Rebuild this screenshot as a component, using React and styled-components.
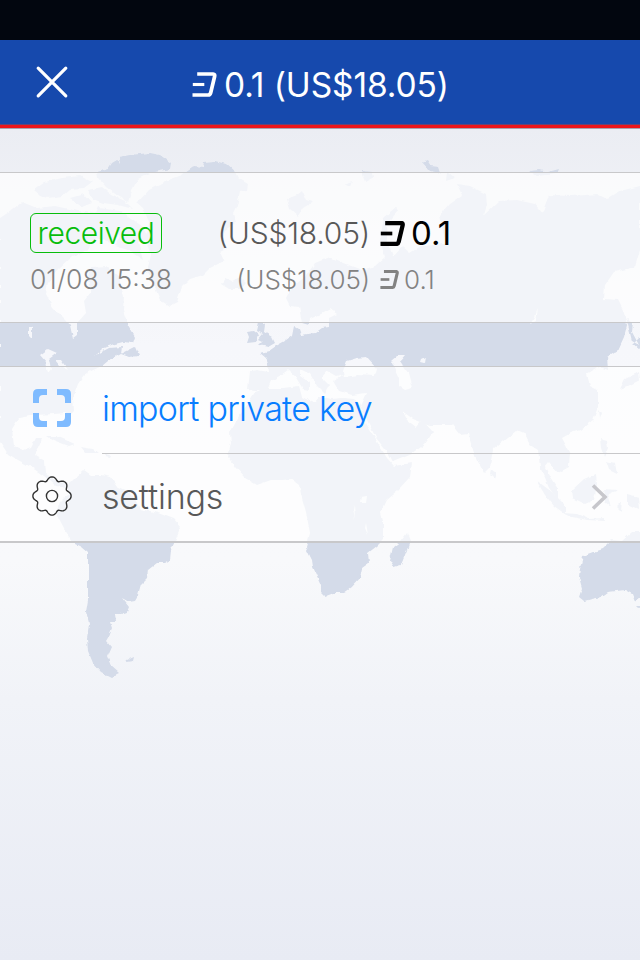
import React from "react";
import styled, { createGlobalStyle } from "styled-components";

const GlobalStyle = createGlobalStyle`
  * { box-sizing: border-box; }
  body { margin: 0; font-family: Inter, "Liberation Sans", sans-serif; }
`;

const Screen = styled.div`
  width: 640px;
  height: 960px;
  display: grid;
  grid-template: 960px / 640px;
  overflow: hidden;
  background: linear-gradient(#ebedf3 128px, #f6f7fb 345px, #f8f9fb 560px, #f1f3f8 700px, #e8ebf4 960px);
`;
const MapLayer = styled.svg`
  grid-area: 1 / 1;
  fill: #d4dbe9;
`;
const Content = styled.div`
  grid-area: 1 / 1;
  z-index: 1;
  display: flex;
  flex-direction: column;
`;
const StatusBar = styled.div`
  height: 40px;
  background: #02060f;
`;
const Header = styled.header`
  height: 89px;
  display: flex;
  background: linear-gradient(#1649ad 84px, #654475 84px 85px, #ec151b 85px 88px, #a8a2ae 88px);
`;
const CloseButton = styled.button`
  width: 104px;
  height: 84px;
  padding: 0;
  border: 0;
  background: none;
  svg { display: block; }
`;
const Title = styled.h1`
  margin: 0;
  padding-left: 88px;
  height: 89px;
  display: flex;
  align-items: center;
  gap: 7px;
  color: #fff;
  font-size: 33.5px;
  font-weight: 370;
  letter-spacing: -0.1px;
  svg { margin-top: -1px; }
`;
const Panel = styled.section`
  height: ${(p) => p.$height}px;
  margin-top: ${(p) => p.$gap}px;
  background: rgba(255, 255, 255, 0.7);
  border-top: 1px solid #c8c8ca;
  border-bottom: ${(p) => p.$bottom}px solid #c8c8ca;
`;
const Transaction = styled(Panel)`
  display: flex;
  padding: 40px 0 0 30px;
`;
const Summary = styled.div`
  width: 160px;
`;
const Badge = styled.div`
  width: 132px;
  height: 40px;
  border: 1px solid #08bd0c;
  border-radius: 6px;
  color: #08bd0c;
  font-size: 30px;
  font-weight: 300;
  line-height: 39px;
  text-align: center;
  letter-spacing: -0.45px;
`;
const DateText = styled.div`
  height: 52px;
  line-height: 52px;
  font-size: 26.5px;
  font-weight: 300;
  color: #828282;
  letter-spacing: 0;
  white-space: nowrap;
`;
const Amounts = styled.div`
  width: 280px;
`;
const AmountRow = styled.div`
  height: ${(p) => (p.$small ? 52 : 40)}px;
  display: grid;
  grid-template-columns: 180px auto 1fr;
  align-items: center;
  color: ${(p) => (p.$small ? "#828282" : "#000")};
  font-size: ${(p) => (p.$small ? 26 : 33)}px;
  font-weight: ${(p) => (p.$small ? 300 : 400)};
`;
const Fiat = styled.span`
  text-align: right;
  white-space: nowrap;
  font-weight: 300;
  font-size: ${(p) => (p.$small ? 26 : 30)}px;
  letter-spacing: ${(p) => (p.$small ? 0 : -0.2)}px;
  color: ${(p) => (p.$small ? "#828282" : "#585858")};
`;
const Coin = styled.span`
  display: flex;
  align-items: center;
  gap: ${(p) => (p.$small ? 5 : 6)}px;
  padding-left: 10px;
`;
const MenuRow = styled.div`
  height: ${(p) => p.$height}px;
  display: flex;
`;
const IconCell = styled.div`
  width: 102px;
  padding: ${(p) => p.$top}px 0 0 32px;
  svg { display: block; }
`;
const MenuLabel = styled.div`
  flex: 1;
  display: flex;
  align-items: center;
  justify-content: space-between;
  padding: 0 31px ${(p) => p.$lift}px 0;
  border-bottom: ${(p) => (p.$divided ? "1px solid #c8c8ca" : "0")};
  color: ${(p) => p.$color};
  font-size: 34px;
  font-weight: 300;
  letter-spacing: ${(p) => p.$tracking}px;
`;

const DashMark = ({ width = 25, height = 25, weight = 3.7 }) => (
  <svg width={width} height={height} viewBox="0 0 25 25" fill="none" stroke="currentColor" strokeWidth={weight}>
    <path d="M5.2 2H21.2Q23.2 2 22.6 4.5L18.7 20.8Q18.2 23 16 23H.5" />
    <path d="M.8 12.5H12.3" strokeWidth={weight - 0.6} />
  </svg>
);

const CloseIcon = () => (
  <svg width="104" height="84" fill="none" stroke="#fff" strokeWidth="3.2" strokeLinecap="round">
    <path d="M38.2 28.2L65.8 55.8M65.8 28.2L38.2 55.8" />
  </svg>
);

const ScanIcon = () => (
  <svg width="40" height="40" fill="#7fbbff">
    <path d="M1 15V6Q1 1 6 1H15V7H11Q7 7 7 11V15Z" />
    <path d="M25 1H34Q39 1 39 6V15H33V11Q33 7 29 7H25Z" />
    <path d="M1 25H7V29Q7 33 11 33H15V39H6Q1 39 1 34Z" />
    <path d="M39 25V34Q39 39 34 39H25V33H29Q33 33 33 29V25Z" />
  </svg>
);

const gearPath = Array.from({ length: 145 }, (_, i) => {
  const a = (i / 144) * Math.PI * 2;
  const r = 17.6 + 1.75 * Math.cos(8 * a) - 0.25 * Math.cos(16 * a);
  return `${i ? "L" : "M"}${(20 + r * Math.cos(a)).toFixed(2)} ${(20 + r * Math.sin(a)).toFixed(2)}`;
}).join("");

const GearIcon = () => (
  <svg width="40" height="40" fill="none" stroke="#333" strokeWidth="1.4">
    <path d={gearPath + "Z"} />
    <circle cx="20" cy="20" r="5.6" />
  </svg>
);

const Chevron = () => (
  <svg width="18" height="26" fill="none" stroke="#c7c7cc" strokeWidth="3.6">
    <path d="M2 1.5L14 13L2 24.5" />
  </svg>
);

const LAND = [
  // Arctic archipelago
  "M97 172L108 169 112 163 117 160 120 164 119 157 130 155 140 154 150 153 160 155 171 163 170 169 160 171 150 173 138 179 132 190 128 202 118 196 106 187 98 178Z",
  "M34 190L45 182 62 178 80 176 92 182 84 188 70 189 62 196 48 198 40 195ZM88 190L102 187 112 195 125 201 133 209 118 205 103 203 93 199ZM70 198L84 194 92 203 82 207ZM98 207L120 210 143 227 150 240 138 242 143 260 128 250 115 246 120 236 106 222 93 218Z",
  // Greenland
  "M182 175L195 166 203 167 204 162 215 161 226 164 235 172 238 178 248 184 247 190 240 191 237 206 233 214 236 222 224 231 221 239 228 248 220 252 224 261 210 268 203 275 190 279 182 287 177 302 169 306 160 300 153 283 147 271 151 255 145 239 150 224 143 208 137 203 149 190 166 181Z",
  // North and Central America
  "M0 218L12 210 22 202 37 208 55 206 78 211 99 214 110 224 121 232 111 242 95 238 88 250 72 256 57 270 48 282 46 294 53 307 65 319 70 325 73 339 77 336 77 323 86 313 84 301 91 292 88 280 91 267 106 266 119 277 121 287 124 296 123 310 128 325 135 337 133 343 123 342 115 344 102 349 94 356 109 348 122 347 121 354 135 347 139 356 129 357 121 354 108 361 102 366 91 371 85 375 78 384 73 398 74 411 69 416 65 413 55 414 35 415 19 418 12 429 14 446 23 450 31 447 35 439 42 439 38 449 35 455 45 461 46 474 57 481 68 482 66 488 56 486 44 476 31 467 18 460 8 454 0 442Z",
  "M47 436L56 436 75 444 69 446 53 440ZM80 447L93 449 98 453 85 453ZM106 454L111 455 110 457 105 456Z",
  // South America
  "M67 486L76 477 84 470 91 475 101 475 111 477 117 486 130 492 136 501 140 509 158 513 174 519 181 527 176 539 171 550 170 560 165 563 157 563 148 570 147 579 141 585 138 596 135 601 129 602 122 598 129 607 127 612 121 614 115 614 116 622 110 622 112 628 109 636 106 641 111 647 107 656 111 666 119 673 111 677 101 672 93 663 88 651 87 638 89 624 86 612 88 600 88 553 81 547 73 543 65 530 56 513 60 502 68 494Z",
  "M127 660L134 657 133 661 126 662Z",
  // Africa
  "M255 392L267 388 283 388 299 386 302 397 314 403 320 396 331 399 343 398 354 399 359 404 366 423 376 440 387 458 394 466 412 463 410 477 398 490 386 500 380 513 383 525 383 540 377 546 368 553 369 563 362 568 360 578 351 588 344 593 333 593 325 596 321 592 321 585 313 567 312 560 306 548 310 533 306 512 302 498 299 485 291 479 283 480 271 480 257 485 245 478 235 467 228 457 231 443 230 433 239 416 247 405Z",
  "M407 533L410 541 407 550 401 565 394 567 390 560 393 547 401 541Z",
  // Eurasia
  "M250 371L257 370 269 372 268 364 266 358 260 353 269 351 276 346 285 341 292 336 294 326 299 329 301 335 315 333 322 328 329 327 329 318 337 314 330 309 321 314 310 319 309 325 302 323 299 307 290 306 286 298 291 288 306 276 315 263 330 257 343 263 362 270 375 266 385 257 380 240 384 217 396 207 398 211 387 224 388 244 393 256 402 246 410 253 421 246 438 245 446 243 439 216 449 204 462 195 457 184 470 186 486 194 487 205 484 215 499 201 517 200 535 204 542 213 549 195 570 196 585 195 597 194 607 199 620 191 640 186 640 250 635 267 614 272 605 285 604 299 618 300 624 312 627 325 624 337 618 350 607 357 608 370 600 367 595 369 587 374 590 386 598 390 598 407 593 420 580 430 571 433 562 438 570 453 569 467 558 473 549 462 545 467 550 477 558 489 558 500 549 488 540 467 538 450 530 445 524 433 517 430 507 438 493 449 490 467 484 473 475 456 468 434 460 435 452 425 430 425 421 422 413 419 402 411 407 420 416 427 422 420 433 432 425 444 412 454 393 462 389 454 376 438 367 420 360 406 366 393 352 395 339 391 333 381 343 374 336 376 327 371 322 377 330 385 325 394 317 386 310 374 300 369 300 376 310 383 310 390 303 389 295 376 288 370 281 375 271 381 267 391 255 390 248 389Z",
  // British Isles, Iceland and polar islands
  "M259 322L265 325 264 332 272 337 275 343 268 347 259 345 263 341 259 339 263 334 257 331ZM254 331L259 335 256 342 247 343 249 337 247 332ZM225 278L232 281 240 277 246 283 241 289 229 289 221 284Z",
  "M287 199L297 195 302 191 306 200 313 202 303 208 298 216 290 209ZM344 184L352 181 350 187ZM361 171L373 172 374 177 365 182ZM422 162L427 160 431 166 439 167 441 173 430 171ZM447 171L455 178 446 181ZM529 171L540 170 548 172 559 169 557 174 537 176Z",
  // East and South-East Asia
  "M626 317L633 323 632 332 639 345 632 341ZM640 337L633 344 640 350ZM625 379L639 372 640 380 628 386 620 389ZM599 409L602 413 600 419ZM600 439L607 441 608 448 604 457 601 448ZM606 461L615 463 617 474 609 470ZM572 490L584 479 596 474 597 485 594 500 585 504 573 498ZM536 480L552 492 565 505 565 514 554 506 545 495ZM563 513L577 514 589 519 604 518 605 521 587 520 572 517ZM603 489L618 490 607 495 611 507 605 502ZM617 507L622 502 621 511ZM627 494L639 497 640 510 627 504Z",
  "M491 469L497 474 495 479 490 474Z",
  // Australia
  "M645 532L632 532 622 541 612 540 603 549 594 552 583 556 580 568 579 577 582 588 579 597 584 601 592 599 601 597 608 592 625 590 632 594 635 602 645 594ZM636 606L645 606 638 608Z",
];
const WATER =
  "M343 371L347 361 357 358 366 357 377 369 375 376 357 375 344 377ZM391 361L398 355 405 355 400 361 408 373 412 388 405 390 399 386 399 378ZM421 359L425 357 424 363 420 362ZM530 324L535 317 538 308 536 321ZM40 355L48 349 57 353 49 359 51 369 48 373 46 362ZM55 360L61 360 68 370 60 366ZM29 326L32 327 32 339 29 336ZM361 497L367 496 366 503 360 503ZM354 505L355 519 353 510ZM366 523L368 535 365 528Z";

const WorldMap = () => (
  <MapLayer width="640" height="960" aria-hidden="true">
    <defs>
      <filter id="coast" x="0" y="0" width="640" height="960" filterUnits="userSpaceOnUse">
        <feTurbulence type="fractalNoise" baseFrequency="0.14" numOctaves="2" seed="4" result="noise" />
        <feDisplacementMap in="SourceGraphic" in2="noise" scale="4" xChannelSelector="R" yChannelSelector="G" />
      </filter>
    </defs>
    <g filter="url(#coast)">
      {LAND.map((d) => <path key={d} d={d} />)}
      <path d={WATER} fill="#f6f7fb" />
    </g>
  </MapLayer>
);

export default function App() {
  return (
    <>
      <GlobalStyle />
      <Screen>
        <WorldMap />
        <Content>
          <StatusBar />
          <Header>
            <CloseButton aria-label="Close"><CloseIcon /></CloseButton>
            <Title><DashMark />0.1 (US$18.05)</Title>
          </Header>
          <Transaction $height={151} $gap={43} $bottom={1}>
            <Summary>
              <Badge>received</Badge>
              <DateText>01/08 15:38</DateText>
            </Summary>
            <Amounts>
              <AmountRow>
                <Fiat>(US$18.05)</Fiat>
                <Coin><DashMark weight={4.3} />0.1</Coin>
              </AmountRow>
              <AmountRow $small>
                <Fiat $small>(US$18.05)</Fiat>
                <Coin $small><DashMark width={19} height={19} weight={4.1} />0.1</Coin>
              </AmountRow>
            </Amounts>
          </Transaction>
          <Panel $height={177} $gap={43} $bottom={2}>
            <MenuRow $height={87}>
              <IconCell $top={21}><ScanIcon /></IconCell>
              <MenuLabel $color="#087dff" $divided $tracking={-0.74} $lift={3}>import private key</MenuLabel>
            </MenuRow>
            <MenuRow $height={87}>
              <IconCell $top={22}><GearIcon /></IconCell>
              <MenuLabel $color="#585858" $tracking={-0.2} $lift={2}>settings<Chevron /></MenuLabel>
            </MenuRow>
          </Panel>
        </Content>
      </Screen>
    </>
  );
}
